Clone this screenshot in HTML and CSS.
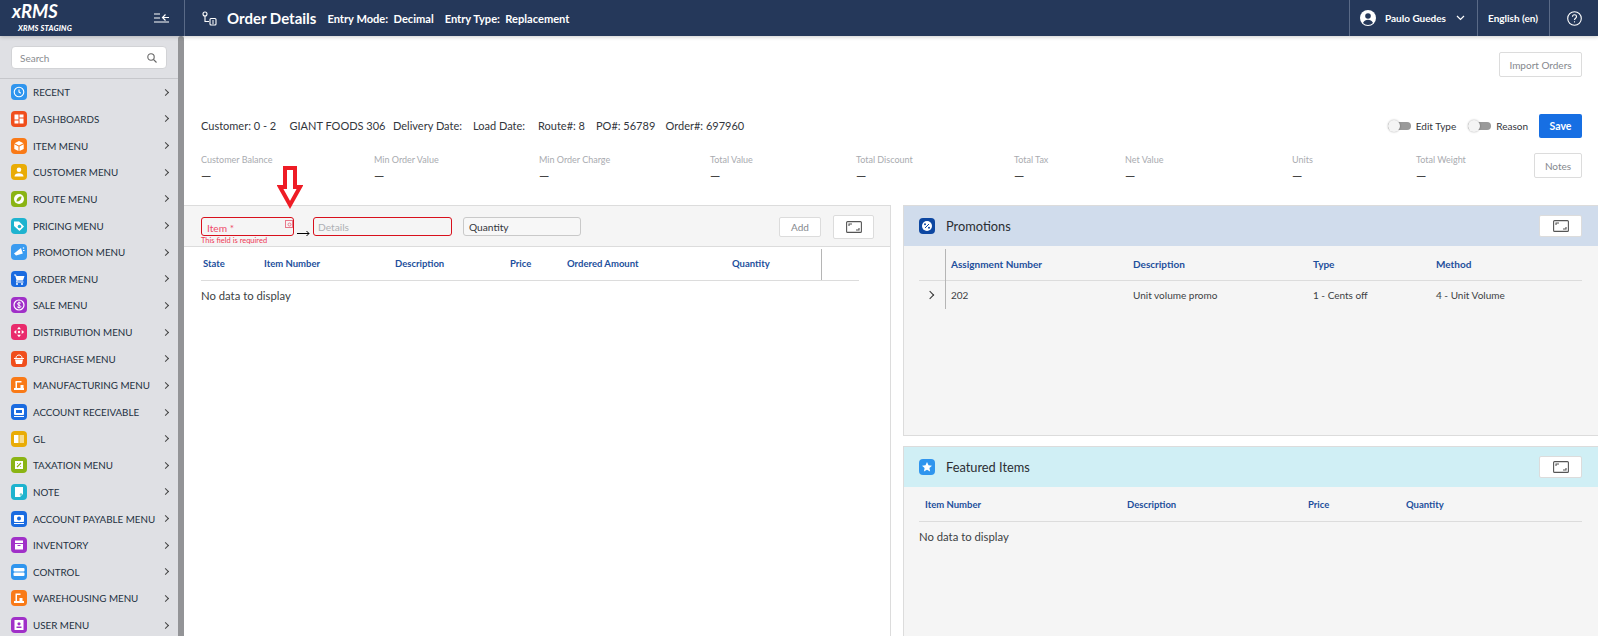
FILE: index.html
```html
<!DOCTYPE html>
<html lang="en">
<head>
  <meta charset="UTF-8">
  <title>Order Details</title>
  <link rel="stylesheet" href="styles.css">
</head>
<body>
  <!-- Top bar -->
  <header class="topbar">
    <div class="brand">
      <div class="brand-text">
        <div class="brand-name">xRMS</div>
        <div class="brand-sub">XRMS STAGING</div>
      </div>
      <svg class="collapse-icon" width="16" height="10" viewBox="0 0 16 10" fill="none" stroke="#fff" stroke-width="1.2"><path d="M0 1h6M0 5h6M0 9h15M15 4.5H9M11.5 1.5L8.5 4.5l3 3"/></svg>
    </div>
    <div class="title-area">
      <svg class="title-icon" width="15" height="15" viewBox="0 0 15 15" fill="none" stroke="#fff" stroke-width="1.1"><circle cx="3" cy="3" r="2"/><path d="M3 5v5.5h4"/><rect x="8" y="7.5" width="6" height="6.5" rx="1"/><path d="M10 10h2M10 12h2"/></svg>
      <span class="page-title">Order Details</span>
      <span class="entry entry-mode">Entry Mode:&nbsp; Decimal</span>
      <span class="entry">Entry Type:&nbsp; Replacement</span>
    </div>
    <div class="user-cell">
      <svg width="16" height="16" viewBox="0 0 16 16"><circle cx="8" cy="8" r="8" fill="#fff"/><circle cx="8" cy="6" r="2.8" fill="#25385a"/><path d="M3 13c1-2.7 3-3.3 5-3.3s4 .6 5 3.3a7 7 0 0 1-10 0z" fill="#25385a"/></svg>
      <span class="user-name">Paulo Guedes</span>
      <svg width="9" height="6" viewBox="0 0 9 6" fill="none" stroke="#fff" stroke-width="1.2"><path d="M1 1l3.5 3.5L8 1"/></svg>
    </div>
    <div class="lang-cell">English (en)</div>
    <div class="help-cell">
      <svg width="15" height="15" viewBox="0 0 15 15" fill="none" stroke="#fff" stroke-width="1.1"><circle cx="7.5" cy="7.5" r="6.8"/><path d="M5.5 5.800c0-1.300 1-2 2-2s2 .7 2 1.900c0 1.500-2 1.600-2 3.300"/><path d="M7.5 10.300v1.100"/></svg>
    </div>
  </header>

  <div class="layout">
    <!-- Sidebar -->
    <aside class="sidebar">
      <div class="side-inner">
        <div class="search-wrap">
          <div class="search-box">
            <span>Search</span>
            <svg width="10" height="10" viewBox="0 0 10 10" fill="none" stroke="#666" stroke-width="1.1"><circle cx="4" cy="4" r="3.2"/><path d="M6.5 6.5L9.5 9.5"/></svg>
          </div>
        </div>
        <nav class="menu">
          <div class="menu-row"><span class="ico c-blue"><svg viewBox="0 0 16 16" fill="none" stroke="#fff" stroke-width="1.1"><circle cx="8" cy="8" r="4.8"/><path d="M8 5.5V8l1.800 1.200"/></svg></span>RECENT<span class="chev"></span></div>
          <div class="menu-row"><span class="ico c-red"><svg viewBox="0 0 16 16" fill="#fff"><rect x="3.5" y="3.5" width="4" height="5"/><rect x="8.5" y="3.5" width="4" height="3"/><rect x="3.5" y="9.5" width="4" height="3"/><rect x="8.5" y="7.5" width="4" height="5"/></svg></span>DASHBOARDS<span class="chev"></span></div>
          <div class="menu-row"><span class="ico c-orange"><svg viewBox="0 0 16 16" fill="#fff"><path d="M8 3l4.5 2.300L8 7.600 3.5 5.300zM3.300 6.200l4.200 2.200v4.700l-4.200-2.200zM12.700 6.200L8.5 8.400v4.700l4.200-2.200z"/></svg></span>ITEM MENU<span class="chev"></span></div>
          <div class="menu-row"><span class="ico c-amber"><svg viewBox="0 0 16 16" fill="#fff"><circle cx="8" cy="5.8" r="2.3"/><path d="M3.5 12.500c0-2.300 2-3.200 4.500-3.200s4.500.9 4.500 3.200z"/></svg></span>CUSTOMER MENU<span class="chev"></span></div>
          <div class="menu-row"><span class="ico c-green"><svg viewBox="0 0 16 16"><circle cx="8" cy="8" r="5" fill="#fff"/><path d="M5.5 10.500c0-3 2-5 5-5 0 3-2 5-5 5z" fill="#8ab414"/></svg></span>ROUTE MENU<span class="chev"></span></div>
          <div class="menu-row"><span class="ico c-teal"><svg viewBox="0 0 16 16"><path d="M3 3.5h5l5 5-4.500 4.500-5.500-5z" fill="#fff"/><circle cx="8.5" cy="8.5" r="1.8" fill="#1eb3cf"/></svg></span>PRICING MENU<span class="chev"></span></div>
          <div class="menu-row"><span class="ico c-sky"><svg viewBox="0 0 16 16" fill="#fff"><path d="M3 9.5l7-5.500 1.800 5.500-6.800 2z"/><circle cx="12.5" cy="4" r=".8"/><rect x="12" y="6" width="1.5" height="1"/></svg></span>PROMOTION MENU<span class="chev"></span></div>
          <div class="menu-row"><span class="ico c-royal"><svg viewBox="0 0 16 16" fill="#fff"><path d="M3 3.5h2l.5 1.500h8l-1.500 4.500H6.500l-.3 1h6.300v1H5l.5-2.300L4.200 4.500H3z"/><circle cx="6" cy="13" r="1"/><circle cx="11" cy="13" r="1"/></svg></span>ORDER MENU<span class="chev"></span></div>
          <div class="menu-row"><span class="ico c-purple"><svg viewBox="0 0 16 16"><circle cx="8" cy="8" r="5" fill="none" stroke="#fff" stroke-width="1.2"/><path d="M9.800 6.300C9.300 5.500 6.500 5.300 6.500 6.800S9.800 8.200 9.800 9.600 6.800 10.900 6.200 9.800M8 4.700v6.600" fill="none" stroke="#fff"/></svg></span>SALE MENU<span class="chev"></span></div>
          <div class="menu-row"><span class="ico c-pink"><svg viewBox="0 0 16 16" fill="#fff"><path d="M8 2.800L10 5.300H6zM8 13.200L10 10.700H6zM2.800 8L5.300 6v4zM13.200 8L10.700 6v4z"/><circle cx="8" cy="8" r="1.2"/></svg></span>DISTRIBUTION MENU<span class="chev"></span></div>
          <div class="menu-row"><span class="ico c-red"><svg viewBox="0 0 16 16" fill="#fff"><path d="M3 7h10v1H3zM4 8.500h8L11 13H5z"/><path d="M5 7c0-4 6-4 6 0" fill="none" stroke="#fff"/></svg></span>PURCHASE MENU<span class="chev"></span></div>
          <div class="menu-row"><span class="ico c-orange"><svg viewBox="0 0 16 16" fill="#fff"><rect x="3" y="11" width="10" height="2"/><rect x="4.5" y="5" width="1.5" height="6"/><rect x="4.5" y="4" width="6" height="1.5"/><rect x="9.5" y="8" width="3" height="3"/></svg></span>MANUFACTURING MENU<span class="chev"></span></div>
          <div class="menu-row"><span class="ico c-royal"><svg viewBox="0 0 16 16"><rect x="3" y="4" width="10" height="7" rx="1" fill="#fff"/><rect x="5" y="6" width="6" height="3" fill="#1a6be0"/><rect x="3" y="12" width="10" height="1" fill="#fff"/></svg></span>ACCOUNT RECEIVABLE<span class="chev"></span></div>
          <div class="menu-row"><span class="ico c-amber"><svg viewBox="0 0 16 16"><path d="M3 4h4.500v8H3z" fill="#fff"/><path d="M8.500 4H13v8H8.500z" fill="#f7dc8f"/></svg></span>GL<span class="chev"></span></div>
          <div class="menu-row"><span class="ico c-green"><svg viewBox="0 0 16 16"><rect x="4" y="4" width="8" height="8" fill="#fff"/><path d="M6 10l4-4M6 6.500h.8M9.300 9.500h.8" stroke="#8ab414" stroke-width="1.2"/></svg></span>TAXATION MENU<span class="chev"></span></div>
          <div class="menu-row"><span class="ico c-teal"><svg viewBox="0 0 16 16"><path d="M4 3h8v7l-3 3H4z" fill="#fff"/><circle cx="10" cy="10.5" r="1.3" fill="#6cc"/></svg></span>NOTE<span class="chev"></span></div>
          <div class="menu-row"><span class="ico c-royal"><svg viewBox="0 0 16 16"><rect x="3" y="4" width="10" height="7" rx="1" fill="#fff"/><circle cx="8" cy="7.5" r="2" fill="#1a6be0"/><rect x="3" y="12" width="10" height="1" fill="#fff"/></svg></span>ACCOUNT PAYABLE MENU<span class="chev"></span></div>
          <div class="menu-row"><span class="ico c-purple"><svg viewBox="0 0 16 16"><rect x="4" y="3.5" width="8" height="9" fill="#fff"/><rect x="4" y="6" width="8" height="1" fill="#a030c8"/><rect x="6.5" y="8" width="3" height="1" fill="#a030c8"/></svg></span>INVENTORY<span class="chev"></span></div>
          <div class="menu-row"><span class="ico c-blue"><svg viewBox="0 0 16 16" fill="#fff"><rect x="2.5" y="4" width="11" height="3.5" rx="1"/><rect x="2.5" y="8.5" width="11" height="3.5" rx="1"/></svg></span>CONTROL<span class="chev"></span></div>
          <div class="menu-row"><span class="ico c-orange"><svg viewBox="0 0 16 16" fill="#fff"><rect x="3" y="11" width="10" height="2"/><rect x="4.5" y="5" width="1.5" height="6"/><rect x="4.5" y="3.5" width="5" height="1.5"/><rect x="8.5" y="8" width="3" height="3"/></svg></span>WAREHOUSING MENU<span class="chev"></span></div>
          <div class="menu-row"><span class="ico c-purple"><svg viewBox="0 0 16 16"><rect x="3.5" y="3" width="9" height="10" fill="#fff"/><circle cx="8" cy="6.8" r="1.6" fill="#a030c8"/><rect x="5.5" y="9.5" width="5" height="1.5" fill="#a030c8"/></svg></span>USER MENU<span class="chev"></span></div>
        </nav>
      </div>
      <div class="side-scroll"></div>
    </aside>

    <!-- Main content -->
    <main class="main">
      <div class="import-row"><button class="btn btn-import">Import Orders</button></div>

      <div class="info-row">
        <span class="info-a">Customer: 0 - 2</span>
        <span class="info-b">GIANT FOODS 306</span>
        <span class="info-c">Delivery Date:</span>
        <span class="info-d">Load Date:</span>
        <span class="info-e">Route#: 8</span>
        <span class="info-f">PO#: 56789</span>
        <span class="info-g">Order#: 697960</span>
        <div class="info-actions">
          <span class="toggle"></span><span class="toggle-label">Edit Type</span>
          <span class="toggle toggle-second"></span><span class="toggle-label">Reason</span>
          <button class="btn-save">Save</button>
        </div>
      </div>

      <div class="stats-row">
        <div class="stat"><div class="stat-label">Customer Balance</div><div class="stat-value">—</div></div>
        <div class="stat"><div class="stat-label">Min Order Value</div><div class="stat-value">—</div></div>
        <div class="stat"><div class="stat-label">Min Order Charge</div><div class="stat-value">—</div></div>
        <div class="stat"><div class="stat-label">Total Value</div><div class="stat-value">—</div></div>
        <div class="stat"><div class="stat-label">Total Discount</div><div class="stat-value">—</div></div>
        <div class="stat"><div class="stat-label">Total Tax</div><div class="stat-value">—</div></div>
        <div class="stat"><div class="stat-label">Net Value</div><div class="stat-value">—</div></div>
        <div class="stat"><div class="stat-label">Units</div><div class="stat-value">—</div></div>
        <div class="stat"><div class="stat-label">Total Weight</div><div class="stat-value">—</div></div>
        <button class="btn btn-notes">Notes</button>
      </div>

      <div class="panels">
        <!-- Order lines -->
        <section class="left-panel">
          <div class="entry-bar">
            <div class="field-item">
              <div class="input input-error"><span class="item-label">Item *</span>
                <svg class="item-search" width="8" height="8" viewBox="0 0 8 8" fill="none" stroke="#e8788a"><rect x=".5" y=".5" width="7" height="7"/><circle cx="4.5" cy="4.5" r="1.5"/></svg>
              </div>
              <div class="field-error">This field is required</div>
            </div>
            <div class="input input-error input-details">Details</div>
            <div class="input input-qty">Quantity</div>
            <button class="btn btn-add">Add</button>
            <button class="btn btn-expand">
              <svg width="16" height="12" viewBox="0 0 16 12" fill="none" stroke="#555" stroke-width="1.1"><rect x=".6" y=".6" width="14.8" height="10.8" rx="1"/><path d="M3 5V3h3M13 7v2h-3"/></svg>
            </button>
          </div>
          <div class="order-table">
            <div class="order-head">
              <span class="oh-state">State</span>
              <span class="oh-item">Item Number</span>
              <span class="oh-desc">Description</span>
              <span class="oh-price">Price</span>
              <span class="oh-amount">Ordered Amount</span>
              <span class="oh-qty">Quantity</span>
            </div>
            <div class="no-data">No data to display</div>
          </div>
          <svg class="red-arrow" width="26" height="44" viewBox="0 0 26 44"><path d="M8 2h10v19h5L13 39 3 21h5z" fill="#fff" stroke="#ee1c25" stroke-width="4"/></svg>
          <svg class="black-arrow" width="13" height="7" viewBox="0 0 13 7" fill="none" stroke="#000"><path d="M0 3.5h12M9.5 1l2.5 2.500L9.5 6"/></svg>
        </section>

        <div class="right-col">
          <section class="card card-promos">
            <div class="card-head head-blue">
              <span class="card-ico ico-navy"><svg viewBox="0 0 16 16"><circle cx="8" cy="8" r="5" fill="#fff"/><path d="M10 6l-4 4" stroke="#0d47a1"/><circle cx="6" cy="6.3" r="1" fill="#0d47a1"/><circle cx="10" cy="9.7" r="1" fill="#0d47a1"/></svg></span>
              <span class="card-title">Promotions</span>
              <button class="btn btn-card">
                <svg width="16" height="12" viewBox="0 0 16 12" fill="none" stroke="#555" stroke-width="1.1"><rect x=".6" y=".6" width="14.8" height="10.8" rx="1"/><path d="M3 5V3h3M13 7v2h-3"/></svg>
              </button>
            </div>
            <div class="promo-table">
              <div class="promo-head">
                <span>Assignment Number</span><span>Description</span><span>Type</span><span>Method</span>
              </div>
              <div class="promo-row">
                <span class="promo-chev"></span>
                <span>202</span><span>Unit volume promo</span><span>1 - Cents off</span><span>4 - Unit Volume</span>
              </div>
            </div>
          </section>
          <section class="card card-featured">
            <div class="card-head head-cyan">
              <span class="card-ico ico-sky"><svg viewBox="0 0 16 16" fill="#fff"><path d="M8 3l1.5 3.300 3.500.4-2.600 2.400.7 3.500L8 10.800l-3.100 1.800.7-3.500L3 6.700l3.500-.4z"/></svg></span>
              <span class="card-title">Featured Items</span>
              <button class="btn btn-card">
                <svg width="16" height="12" viewBox="0 0 16 12" fill="none" stroke="#555" stroke-width="1.1"><rect x=".6" y=".6" width="14.8" height="10.8" rx="1"/><path d="M3 5V3h3M13 7v2h-3"/></svg>
              </button>
            </div>
            <div class="feat-table">
              <div class="feat-head">
                <span>Item Number</span><span>Description</span><span>Price</span><span>Quantity</span>
              </div>
              <div class="no-data">No data to display</div>
            </div>
          </section>
        </div>
      </div>
    </main>
  </div>
</body>
</html>
```

FILE: styles.css
```css
* {
  box-sizing: border-box;
}
html, body {
  margin: 0;
  height: 636px;
  overflow: hidden;
}
body {
  font-family: Lato, "Open Sans", sans-serif;
  font-size: 11px;
  color: #33363c;
  background: #fff;
}
button {
  font-family: inherit;
  cursor: pointer;
}

/* Top bar */
.topbar {
  display: flex;
  height: 36px;
  background: #25385a;
  color: #fff;
  box-shadow: 0 1px 4px rgba(0, 0, 0, 0.2);
  position: relative;
}
.brand {
  width: 185px;
  display: flex;
  align-items: center;
  justify-content: space-between;
  padding: 0 14px 0 12px;
  border-right: 1px solid #5a6a87;
}
.brand-text {
  padding-top: 2px;
}
.brand-name {
  font-size: 18.5px;
  font-weight: 700;
  font-style: italic;
  line-height: 15px;
  margin-top: -1px;
}
.brand-sub {
  font-size: 7.5px;
  font-weight: 900;
  font-style: italic;
  line-height: 8px;
  margin: 6px 0 0 6px;
  letter-spacing: 0.2px;
}
.title-area {
  flex: 1;
  display: flex;
  align-items: center;
  padding-left: 17px;
}
.title-icon {
  margin-right: 10px;
}
.page-title {
  font-size: 15px;
  font-weight: 700;
  margin-right: 11px;
}
.entry {
  font-size: 11.1px;
  font-weight: 700;
}
.entry-mode {
  margin-right: 11px;
}
.user-cell {
  width: 128px;
  display: flex;
  align-items: center;
  padding-left: 10px;
  border-left: 1px solid #5a6a87;
}
.user-name {
  font-size: 10px;
  font-weight: 700;
  width: 71px;
  margin-left: 9px;
}
.lang-cell {
  width: 72px;
  display: flex;
  align-items: center;
  padding-left: 10px;
  font-size: 10px;
  font-weight: 700;
  border-left: 1px solid #5a6a87;
}
.help-cell {
  width: 49px;
  display: flex;
  align-items: center;
  padding-left: 17px;
  border-left: 1px solid #5a6a87;
}

/* Sidebar */
.layout {
  display: flex;
  height: 600px;
}
.sidebar {
  width: 184px;
  display: flex;
  background: #dfe0e4;
  overflow: hidden;
}
.side-inner {
  width: 178px;
}
.side-scroll {
  width: 6px;
  background: #939497;
  border-radius: 3px 3px 0 0;
}
.search-wrap {
  height: 43px;
  padding: 10px 0 0 11px;
  border-bottom: 1px solid #c6c7cb;
}
.search-box {
  width: 156px;
  height: 23px;
  background: #fff;
  border: 1px solid #d2d3d6;
  border-radius: 4px;
  display: flex;
  align-items: center;
  justify-content: space-between;
  padding: 0 9px 0 8px;
  font-size: 10px;
  color: #8a8c90;
}
.menu-row {
  height: 26.65px;
  display: flex;
  align-items: center;
  padding: 0 10px 0 11px;
  font-size: 9.8px;
  color: #23303f;
  white-space: nowrap;
}
.ico {
  width: 16px;
  height: 16px;
  border-radius: 4px;
  margin-right: 6px;
  flex: none;
}
.ico svg {
  display: block;
}
.chev {
  margin-left: auto;
  width: 5px;
  height: 5px;
  border-top: 1.2px solid #444;
  border-right: 1.2px solid #444;
  transform: rotate(45deg);
  flex: none;
}
.c-blue { background: #2f95ee; }
.c-red { background: #f04e1c; }
.c-orange { background: #f97a17; }
.c-amber { background: #e9ac06; }
.c-green { background: #8ab414; }
.c-teal { background: #1eb3cf; }
.c-sky { background: #3a9bf0; }
.c-royal { background: #1a6be0; }
.c-purple { background: #a030c8; }
.c-pink { background: #e92b6c; }

/* Main */
.main {
  flex: 1;
  min-width: 0;
}
.import-row {
  height: 78px;
  display: flex;
  justify-content: flex-end;
  align-items: flex-end;
  padding-right: 16px;
  padding-bottom: 37px;
}
.btn {
  background: #fff;
  border: 1px solid #dcdcdc;
  border-radius: 2px;
  color: #85888d;
  font-size: 10px;
  padding: 0;
}
.btn-import {
  width: 83px;
  height: 25px;
}
.info-row {
  display: flex;
  align-items: center;
  height: 24px;
  padding-left: 17px;
  font-size: 11px;
}
.info-row > span {
  margin-bottom: 2px;
}
.info-a { width: 88.5px; }
.info-b { width: 103.5px; }
.info-c { width: 80px; }
.info-d { width: 65px; }
.info-e { width: 58px; }
.info-f { width: 69.5px; }
.info-g { white-space: nowrap; }
.info-actions {
  margin-left: auto;
  display: flex;
  align-items: center;
  padding-right: 16px;
  font-size: 10px;
}
.toggle {
  width: 23px;
  height: 8px;
  background: #9a9a9a;
  border-radius: 4px;
  position: relative;
  margin-right: 5px;
}
.toggle::before {
  content: "";
  position: absolute;
  left: 0;
  top: -2px;
  width: 12px;
  height: 12px;
  border-radius: 50%;
  background: #f4f4f4;
  box-shadow: 0 0 2px rgba(0, 0, 0, 0.35);
}
.toggle-second {
  margin-left: 12px;
}
.btn-save {
  width: 43px;
  height: 24px;
  margin-left: 11px;
  background: #176fe3;
  color: #fff;
  border: 0;
  border-radius: 2px;
  font-size: 10.5px;
  font-weight: 700;
}
.stats-row {
  display: grid;
  grid-template-columns: 173px 165px 171px 146px 158px 111px 167px 124px 118px 48px;
  height: 67px;
  padding: 16px 16px 0 17px;
  align-items: start;
}
.stat-label {
  font-size: 9px;
  color: #a9abb0;
  line-height: 12px;
}
.stat-value {
  font-size: 13px;
  color: #444;
  line-height: 14px;
  margin-top: 3px;
}
.btn-notes {
  width: 48px;
  height: 25px;
  margin-top: -1px;
}

/* Panels */
.panels {
  display: flex;
  height: 431px;
  gap: 12px;
}
.left-panel {
  width: 707px;
  position: relative;
  border-top: 1px solid #dcdcdc;
  border-right: 1px solid #dcdcdc;
}
.entry-bar {
  height: 41px;
  background: #f5f5f5;
  border-bottom: 1px solid #dcdcdc;
  display: flex;
  align-items: flex-start;
  padding: 11px 0 0 17px;
}
.input {
  height: 19px;
  border-radius: 3px;
  border: 1px solid #c9c9c9;
  background: #fff;
  font-size: 10.2px;
  display: flex;
  align-items: center;
  padding-left: 5px;
}
.input-error {
  border-color: #d8101c;
  border-width: 1.5px;
  background: #f5f5f5;
}
.field-item {
  width: 93px;
  position: relative;
}
.item-label {
  color: #ef4a6a;
  padding-top: 2px;
}
.item-search {
  position: absolute;
  right: 1px;
  top: 3px;
}
.field-error {
  font-size: 7.5px;
  line-height: 9px;
  margin-top: 0;
  color: #ef3a55;
  white-space: nowrap;
}
.input-details {
  width: 139px;
  margin-left: 19px;
  color: #aeb0b4;
  padding-left: 4px;
}
.input-qty {
  width: 118px;
  margin-left: 11px;
  background: #f7f7f7;
  padding-top: 1px;
}
.btn-add {
  width: 42px;
  height: 20px;
  margin-left: auto;
  margin-right: 12px;
}
.btn-expand {
  width: 41px;
  height: 24px;
  margin-top: -2px;
  margin-right: 16px;
  display: flex;
  align-items: center;
  justify-content: center;
}
.order-table {
  padding: 0 31px 0 17px;
}
.order-head {
  display: grid;
  grid-template-columns: 61px 131px 115px 57px 165px 89px 1fr;
  height: 34px;
  align-items: center;
  padding-left: 2px;
  border-bottom: 1px solid #dcdcdc;
  font-size: 9.5px;
  font-weight: 700;
  color: #1d4f9c;
  position: relative;
}
.order-head::after {
  content: "";
  position: absolute;
  left: 620px;
  top: 2px;
  bottom: 0;
  width: 1px;
  background: #b5b5b5;
}
.no-data {
  font-size: 11.3px;
  margin-top: 8px;
  color: #3c3f44;
}
.red-arrow {
  position: absolute;
  left: 93px;
  top: -40px;
}
.black-arrow {
  position: absolute;
  left: 113px;
  top: 24px;
}
.right-col {
  flex: 1;
  display: flex;
  flex-direction: column;
  gap: 10px;
}
.card {
  background: #f5f5f5;
  border: 1px solid #dcdcdc;
  border-right: 0;
}
.card-promos {
  height: 231px;
}
.card-featured {
  flex: 1;
  border-bottom: 0;
}
.card-head {
  height: 40px;
  display: flex;
  align-items: center;
  padding: 0 16px 0 15px;
}
.head-blue { background: #d0dcec; }
.head-cyan { background: #d0eff5; }
.card-ico {
  width: 16px;
  height: 16px;
  border-radius: 4px;
  margin-right: 11px;
}
.card-ico svg {
  display: block;
}
.ico-navy { background: #0d47a1; }
.ico-sky { background: #2f95ee; }
.card-title {
  font-size: 12.8px;
  color: #2b2e33;
}
.btn-card {
  width: 43px;
  height: 22px;
  margin-left: auto;
  display: flex;
  align-items: center;
  justify-content: center;
}
.promo-table {
  margin: 3px 16px 0 15px;
  position: relative;
}
.promo-table::before {
  content: "";
  position: absolute;
  left: 26px;
  top: 0;
  bottom: 0;
  width: 1px;
  background: #b5b5b5;
}
.promo-head, .promo-row {
  display: grid;
  grid-template-columns: 182px 180px 123px 1fr;
  padding-left: 32px;
  align-items: center;
}
.promo-head {
  height: 32px;
  padding-bottom: 2px;
  border-bottom: 1px solid #dcdcdc;
  font-size: 10px;
  font-weight: 700;
  color: #1d4f9c;
}
.promo-row {
  height: 28px;
  font-size: 10px;
  color: #3c3f44;
  position: relative;
}
.promo-chev {
  position: absolute;
  left: 8px;
  top: 11px;
  width: 6px;
  height: 6px;
  border-top: 1.3px solid #333;
  border-right: 1.3px solid #333;
  transform: rotate(45deg);
}
.feat-table {
  margin: 0 16px 0 15px;
}
.feat-head {
  display: grid;
  grid-template-columns: 202px 181px 98px 1fr;
  height: 35px;
  align-items: center;
  padding-left: 6px;
  border-bottom: 1px solid #dcdcdc;
  font-size: 9.5px;
  font-weight: 700;
  color: #1d4f9c;
}
```
